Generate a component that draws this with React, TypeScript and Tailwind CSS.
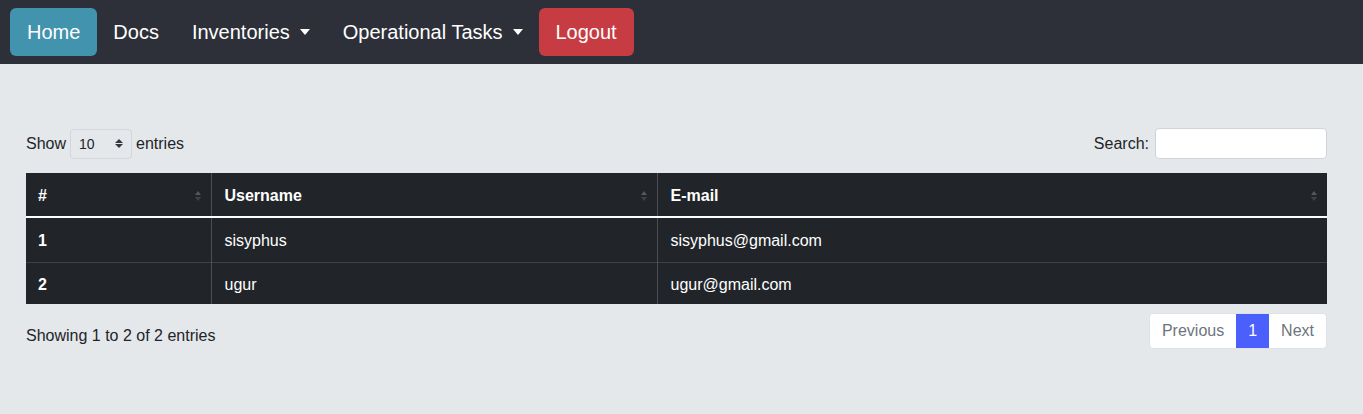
import { useState } from "react";

const users = [
  { id: 1, username: "sisyphus", email: "sisyphus@gmail.com" },
  { id: 2, username: "ugur", email: "ugur@gmail.com" },
];

function Caret() {
  return (
    <span className="ml-[10px] inline-block h-0 w-0 border-x-[5.5px] border-t-[6px] border-x-transparent border-t-white align-middle" />
  );
}

function SortArrows() {
  return (
    <span className="flex flex-col items-center gap-[2px]">
      <span className="h-0 w-0 border-x-[3px] border-b-[4px] border-x-transparent border-b-[#55595d]" />
      <span className="h-0 w-0 border-x-[3px] border-t-[4px] border-x-transparent border-t-[#3f4347]" />
    </span>
  );
}

export default function App() {
  const [search, setSearch] = useState("");
  const [pageSize, setPageSize] = useState("10");

  const rows = users.filter(
    (u) => u.username.includes(search) || u.email.includes(search)
  );

  return (
    <div className="min-h-screen bg-[#e5e8eb] font-['Liberation_Sans',Arial,sans-serif] text-[#212529]">
      {/* navbar */}
      <nav className="flex h-16 items-center bg-[#2e3039] px-[10px] text-[20px] text-white">
        <a className="flex h-12 items-center rounded-md bg-[#4193ae] px-[17px]">
          Home
        </a>
        <a className="flex h-12 items-center px-[16px]">Docs</a>
        <a className="flex h-12 items-center px-[17px]">
          Inventories
          <Caret />
        </a>
        <a className="flex h-12 items-center px-[16px]">
          Operational Tasks
          <Caret />
        </a>
        <a className="flex h-12 items-center rounded-md bg-[#c63c42] px-[17px]">
          Logout
        </a>
      </nav>

      <div className="pl-[26px] pr-[36px] pt-16">
        {/* length + search */}
        <div className="flex items-center justify-between">
          <div className="flex items-center text-[16px]">
            Show
            <div className="mx-[4px] flex h-[30px] w-[62px] items-center justify-between rounded border border-[#d3d6da] px-[8px] text-[14px]">
              <select
                value={pageSize}
                onChange={(e) => setPageSize(e.target.value)}
                className="appearance-none bg-transparent pt-[2px] outline-none"
              >
                <option value="10">10</option>
                <option value="25">25</option>
              </select>
              <span className="flex flex-col gap-[1px]">
                <span className="h-0 w-0 border-x-[4px] border-b-[4px] border-x-transparent border-b-[#343a40]" />
                <span className="h-0 w-0 border-x-[4px] border-t-[4px] border-x-transparent border-t-[#343a40]" />
              </span>
            </div>
            entries
          </div>
          <div className="flex items-center text-[16px]">
            Search:
            <input
              value={search}
              onChange={(e) => setSearch(e.target.value)}
              className="ml-[6px] h-[31px] w-[172px] rounded border border-[#ced4da] bg-white px-2 outline-none"
            />
          </div>
        </div>

        {/* table */}
        <table className="mt-[14px] w-full border-collapse bg-[#212529] text-[16px] text-white">
          <thead>
            <tr className="h-[44px] border-b-2 border-white">
              <th className="w-[185px] border-r border-[#4b4f53] pl-[12px] pr-[10px] pt-[3px] text-left font-bold">
                <div className="flex items-center justify-between">
                  #
                  <SortArrows />
                </div>
              </th>
              <th className="w-[446px] border-r border-[#4b4f53] pl-[13px] pr-[10px] pt-[3px] text-left font-bold">
                <div className="flex items-center justify-between">
                  Username
                  <SortArrows />
                </div>
              </th>
              <th className="pl-[13px] pr-[10px] pt-[3px] text-left font-bold">
                <div className="flex items-center justify-between">
                  E-mail
                  <SortArrows />
                </div>
              </th>
            </tr>
          </thead>
          <tbody>
            {rows.map((u, i) => (
              <tr
                key={u.id}
                className={
                  i === 0 ? "h-[45px] border-b border-[#3e4246]" : "h-[42px]"
                }
              >
                <td className="border-r border-[#4b4f53] pl-[12px] pt-[3px] font-bold">{u.id}</td>
                <td className="border-r border-[#4b4f53] pl-[13px] pt-[3px]">{u.username}</td>
                <td className="pl-[13px] pt-[3px]">{u.email}</td>
              </tr>
            ))}
          </tbody>
        </table>

        {/* info + pagination */}
        <div className="mt-[9px] flex items-start justify-between">
          <div className="pt-[11px] text-[16px]">
            Showing 1 to {rows.length} of {rows.length} entries
          </div>
          <div className="flex h-[36px] overflow-hidden rounded border border-[#dee2e6] bg-white text-[16px]">
            <span className="flex items-center px-[12px] text-[#6c757d]">Previous</span>
            <span className="flex items-center bg-[#4a5ffc] px-[12px] text-white">1</span>
            <span className="flex items-center px-[12px] text-[#6c757d]">Next</span>
          </div>
        </div>
      </div>
    </div>
  );
}
